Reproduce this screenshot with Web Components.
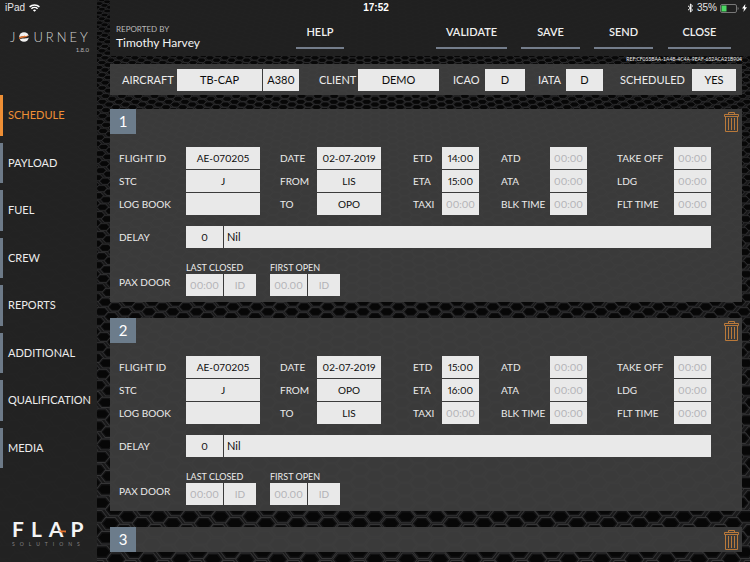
<!DOCTYPE html>
<html lang="en">
<head>
<meta charset="utf-8">
<title>Journey</title>
<style>
  body { margin: 0; background: #0c0c0d; font-family: Lato, "Open Sans", sans-serif; color: #e4e4e4; }
</style>
</head>
<body>
<journey-app></journey-app>
<script>
const define = (name, html, setup) => {
  customElements.define(name, class extends HTMLElement {
    connectedCallback() {
      if (this.shadowRoot) return;
      const root = this.attachShadow({ mode: "open" });
      const t = document.createElement("template");
      t.innerHTML = typeof html === "function" ? html(this) : html;
      root.append(t.content.cloneNode(true));
      if (setup) setup(this, root);
    }
  });
};

/* Honeycomb mesh whose cells grow towards the bottom of the page */
define("mesh-backdrop", `
<style>
  :host { display: block; overflow: hidden; min-height: 0; contain: size; }
  svg { display: block; width: 100%; height: 100%; }
</style>
<svg viewBox="0 0 750 562" preserveAspectRatio="xMidYMid slice" aria-hidden="true"></svg>`,
(host, root) => {
  let out = '<rect width="750" height="562" fill="#19191a"/>';
  let y = 0, odd = 0;
  while (y < 580) {
    const pitch = 13 + 18 * y / 520, h = 3.6 + 10.4 * y / 520, q = pitch / 6;
    for (let i = -30; i <= 30; i++) {
      const x = 375 + (i + odd / 2) * pitch;
      if (x < -20 || x > 770) continue;
      const pts = (a, b) => [[-2,0],[-1,-1],[1,-1],[2,0],[1,1],[-1,1]]
        .map(p => (x + p[0] * q * a).toFixed(1) + "," + (y + p[1] * h / 2 * b).toFixed(1)).join(" ");
      out += `<polygon points="${pts(.97, .95)}" fill="#353536"/><polygon points="${pts(.87, .8)}" fill="#121213"/><polygon points="${pts(.7, .6)}" fill="#070707"/>`;
    }
    y += h / 2; odd = 1 - odd;
  }
  root.querySelector("svg").innerHTML = out;
});

define("status-bar", `
<style>
  :host { display: grid; grid-template-columns: 1fr auto 1fr; align-items: center; padding: 0 3px 0 5px;
    font: 10px/16px "Liberation Sans", sans-serif; color: #e6e6e6; }
  div { display: flex; align-items: center; gap: 4px; }
  .end { justify-content: flex-end; gap: 3px; }
  b { font-weight: 700; color: #fff; }
</style>
<div><span>iPad</span>
  <svg width="11" height="8" viewBox="0 0 11 8" fill="none" stroke="#fff" stroke-width="1.5"><path d="M.6 2.9a7 7 0 0 1 9.8 0M2.4 4.8a4.4 4.4 0 0 1 6.2 0"/><path d="M5.5 7.8 3.9 6.2a2.3 2.3 0 0 1 3.2 0z" fill="#fff" stroke="none"/></svg>
</div>
<b>17:52</b>
<div class="end">
  <svg width="7" height="10" viewBox="0 0 7 10" fill="none" stroke="#fff"><path d="M1 2.8 5.6 7 3.4 9V1l2.2 2L1 7.2"/></svg>
  <span>35%</span>
  <svg width="19" height="9" viewBox="0 0 19 9"><rect x=".5" y=".5" width="16" height="8" rx="1.5" fill="none" stroke="#777"/><rect x="1.5" y="1.5" width="5" height="6" fill="#4cd964"/><path d="M17.6 3v3q1-.4 1-1.5t-1-1.5z" fill="#777"/></svg>
  <svg width="5" height="8" viewBox="0 0 5 8"><path d="M3.3 0 0 4.6h2L1.4 8 5 3.2H3z" fill="#fff"/></svg>
</div>`);

define("journey-logo", `
<style>
  :host { display: block; padding: 0 8px 0 10px; }
  .mark { display: flex; align-items: center; gap: 4px; font-size: 13px; line-height: 18px; font-weight: 300; color: #d2d2d2; }
  .mark span { letter-spacing: 3px; }
  svg { flex: none; }
  .v { font-size: 6px; line-height: 8px; text-align: right; color: #b4b4b4; }
</style>
<div class="mark">J
  <svg width="10" height="10" viewBox="0 0 10 10"><circle cx="5" cy="5" r="4.8" fill="#f2f2f2"/><path d="M0 5.2C3 3.400 7 5.400 10 3.600V5.600C7 7.300 3 5.400 .3 7.400z" fill="#222"/><path d="M.1 5.600C3 3 6.500 5 9.700 3C7.500 6.200 3 5 .2 7z" fill="#e5732e"/></svg>
  <span>URNEY</span></div>
<div class="v">1.8.0</div>`);

define("flap-logo", `
<style>
  :host { display: block; padding: 0 0 0 12px; }
  .mark { display: grid; font-size: 21px; line-height: 24px; font-weight: 700; color: #f4f4f4; letter-spacing: 7px; }
  .mark > * { grid-area: 1 / 1; }
  svg { width: 75px; height: 24px; }
  small { display: block; font-size: 5px; line-height: 6px; letter-spacing: 5px; color: #858585; }
</style>
<div class="mark"><span>FLAP</span><svg viewBox="0 0 75 24" aria-hidden="true"><path d="M46 13.500h8v2l-4-.500 1.500 2z" fill="#e5732e"/></svg></div>
<small>SOLUTIONS</small>`);

define("nav-item", h => `
<style>
  :host { display: grid; }
  a { display: flex; align-items: center; border-left: 3px solid #6d7a88; padding-left: 5px;
    color: #ececec; text-decoration: none; font-size: 11px; line-height: 14px; }
  :host([current]) a { color: #ee8f35; border-color: #ee8f35; }
</style>
<a href="#" ${h.hasAttribute("current") ? 'aria-current="page"' : ""}><slot></slot></a>`);

define("side-bar", `
<style>
  :host { display: flex; flex-direction: column; background: rgba(35,35,35,.97); box-sizing: border-box; padding: 28px 0 15px; }
  nav { flex: 1; display: grid; grid-auto-rows: 1fr; gap: 7px; margin: 41px 0 49px; }
</style>
<journey-logo></journey-logo>
<nav>
  <nav-item current>SCHEDULE</nav-item><nav-item>PAYLOAD</nav-item><nav-item>FUEL</nav-item><nav-item>CREW</nav-item>
  <nav-item>REPORTS</nav-item><nav-item>ADDITIONAL</nav-item><nav-item>QUALIFICATION</nav-item><nav-item>MEDIA</nav-item>
</nav>
<flap-logo></flap-logo>`);

define("tool-button", `
<style>
  :host { display: block; }
  button { all: unset; box-sizing: border-box; width: 100%; display: block; text-align: center; cursor: pointer;
    border-bottom: 2px solid #747d8b; padding-bottom: 6px; font-size: 11px; line-height: 18px; font-weight: 600; color: #efefef; }
</style>
<button type="button"><slot></slot></button>`);

define("top-bar", `
<style>
  :host { display: grid; grid-template-columns: 186fr 48fr 92fr 71fr 14fr 59fr 14fr 59fr 15fr 63fr 19fr;
    align-items: start; background: rgba(33,33,33,.97); box-sizing: border-box; padding: 23px 0 5px 0; }
  .who { padding-left: 6px; font-size: 12px; line-height: 16px; color: #f2f2f2; }
  small { display: block; font-size: 8px; line-height: 12px; color: #b9b9b9; }
</style>
<div class="who"><small>REPORTED BY</small>Timothy Harvey</div>
<tool-button>HELP</tool-button><i></i>
<tool-button>VALIDATE</tool-button><i></i>
<tool-button>SAVE</tool-button><i></i>
<tool-button>SEND</tool-button><i></i>
<tool-button>CLOSE</tool-button>`);

/* A label followed by one or two joined boxes */
define("field-row", h => {
  const box = (v, ph, w, name) => `<input value="${v || ""}" placeholder="${ph || ""}" style="${w ? `flex:0 0 ${w}px` : "flex:1"}" ${name ? `aria-label="${name}"` : 'id="f"'}>`;
  const a = n => h.getAttribute(n);
  return `
<style>
  :host { display: flex; align-items: center; min-width: 0; }
  label { flex: 1 0 auto; font-size: 10px; line-height: 14px; color: #ebebeb; white-space: nowrap; }
  :host([lead]) label { flex: 0 0 67px; }
  :host([meta]) label { flex: 0 0 var(--label-width, auto); font-size: 11px; }
  div { display: flex; gap: 1px; min-width: 0; }
  :host([lead]) div, :host([meta]) div { flex: 1; }
  input { box-sizing: border-box; width: 0; min-width: 0; height: 22px; margin: 0; padding: 0; border: 0; border-radius: 0;
    background: #e9e9e9; color: #0c0c0c; font: 10px/22px Lato, sans-serif; font-variant-numeric: proportional-nums; text-align: center; }
  :host([meta]) input { font-size: 11px; }
  input::placeholder { color: #b2b2b6; opacity: 1; }
  :host([lead]) input + input { text-align: left; padding-left: 3px; font-size: 11px; }
</style>
<label for="f">${a("label")}</label>
<div>${box(a("value"), a("hint"), a("w"))}${h.hasAttribute("second") ? box(a("second"), "", a("w2"), a("label") + " detail") : ""}</div>`;
});

define("flight-meta", `
<style>
  :host { display: grid; grid-template-columns: 177fr 140fr 86fr 78fr 133fr; background: rgba(62,62,62,.95); padding: 5px 6px 4px 12px; }
  .a { --label-width: 55px; }
  .b { --label-width: 39px; margin-left: 20px; }
  .c { --label-width: 32px; margin-left: 14px; }
  .d { --label-width: 28px; margin-left: 13px; }
  .s { --label-width: 72px; margin-left: 17px; }
</style>
<field-row meta class="a" label="AIRCRAFT" value="TB-CAP" second="A380" w2="36"></field-row>
<field-row meta class="b" label="CLIENT" value="DEMO"></field-row>
<field-row meta class="c" label="ICAO" value="D"></field-row>
<field-row meta class="d" label="IATA" value="D"></field-row>
<field-row meta class="s" label="SCHEDULED" value="YES"></field-row>`);

define("door-time", h => `
<style>
  :host { display: block; }
  fieldset { all: unset; display: grid; gap: 1px; }
  legend { all: unset; font-size: 9px; line-height: 12px; color: #ebebeb; }
  div { display: grid; grid-template-columns: 37px 32px; gap: 1px; }
  input { box-sizing: border-box; width: 100%; height: 22px; border: 0; border-radius: 0; padding: 0; margin: 0; background: #e9e9e9;
    font: 10px/22px Lato, sans-serif; font-variant-numeric: proportional-nums; text-align: center; }
  input::placeholder { color: #b2b2b6; opacity: 1; }
</style>
<fieldset><legend>${h.getAttribute("label")}</legend>
<div><input placeholder="${h.getAttribute("hint")}" aria-label="Time"><input placeholder="ID" aria-label="ID"></div></fieldset>`);

define("leg-card", h => {
  const a = n => h.getAttribute(n);
  return `
<style>
  :host { display: block; background: rgba(61,61,61,.95); }
  header { display: flex; justify-content: space-between; align-items: flex-start; height: 25px; }
  h2 { margin: 0; width: 26px; font-size: 15px; line-height: 25px; font-weight: 400; text-align: center; background: #6c7c8b; color: #fff; }
  button { all: unset; cursor: pointer; padding: 3px 3px 0 0; line-height: 0; }
  section { padding: 13px 31px 6px 9px; display: grid; gap: 11px; }
  .times { display: grid; grid-template-columns: 141fr 121fr 98fr 108fr 124fr; }
  .times div { display: grid; gap: 1px; }
  .times div:nth-child(2) { padding-left: 20px; } .times div:nth-child(3) { padding-left: 32px; }
  .times div:nth-child(4) { padding-left: 22px; } .times div:nth-child(5) { padding-left: 30px; }
  .doors { display: flex; align-items: flex-end; gap: 14px; margin-top: 3px; }
  .doors span { width: 53px; font-size: 10px; line-height: 14px; padding-bottom: 7px; white-space: nowrap; color: #ebebeb; }
</style>
<header><h2>${a("n")}</h2><button type="button" aria-label="Delete leg ${a("n")}">
<svg width="15" height="20" viewBox="0 0 15 20" fill="none" stroke="#b9793a"><path d="M.5 2.500h14v2H.5zM4.500 2.500v-2h6v2M1.500 4.500v15h12v-15M4.500 6v12M7.500 6v12M10.500 6v12"/></svg></button></header>
${a("from") ? `<section>
<div class="times">
  <div><field-row w="74" label="FLIGHT ID" value="AE-070205"></field-row><field-row w="74" label="STC" value="J"></field-row><field-row w="74" label="LOG BOOK"></field-row></div>
  <div><field-row w="64" label="DATE" value="02-07-2019"></field-row><field-row w="64" label="FROM" value="${a("from")}"></field-row><field-row w="64" label="TO" value="${a("to")}"></field-row></div>
  <div><field-row w="37" label="ETD" value="${a("etd")}"></field-row><field-row w="37" label="ETA" value="${a("eta")}"></field-row><field-row w="37" label="TAXI" hint="00:00"></field-row></div>
  <div><field-row w="37" label="ATD" hint="00:00"></field-row><field-row w="37" label="ATA" hint="00:00"></field-row><field-row w="37" label="BLK TIME" hint="00:00"></field-row></div>
  <div><field-row w="37" label="TAKE OFF" hint="00:00"></field-row><field-row w="37" label="LDG" hint="00:00"></field-row><field-row w="37" label="FLT TIME" hint="00:00"></field-row></div>
</div>
<field-row lead w="37" label="DELAY" value="0" second="Nil"></field-row>
<div class="doors"><span>PAX DOOR</span><door-time label="LAST CLOSED" hint="00:00"></door-time><door-time label="FIRST OPEN" hint="00.00"></door-time></div>
</section>` : ""}`;
});

define("journey-app", `
<style>
  :host { display: grid; grid-template-columns: 97px 1fr; grid-template-rows: 16px auto; min-height: 100vh; }
  mesh-backdrop { grid-area: 1 / 1 / 3 / 3; }
  side-bar { grid-area: 1 / 1 / 3 / 2; }
  main { grid-area: 1 / 2 / 3 / 3; margin-left: 13px; padding-bottom: 10px; min-width: 0; }
  status-bar { grid-area: 1 / 1 / 2 / 3; }
  p { margin: 0 8px 0 0; text-align: right; font-size: 5px; line-height: 6px; padding: 0 0 2px; color: #eee; }
  .list { margin: 14px 8px 0 0; display: grid; gap: 16px; }
  flight-meta { margin-right: 8px; }
</style>
<mesh-backdrop></mesh-backdrop>
<side-bar></side-bar>
<main>
  <top-bar></top-bar>
  <p>REF:CF055BAA-1A4B-4C4A-9EAF-652ACA21B904</p>
  <flight-meta></flight-meta>
  <div class="list">
    <leg-card n="1" from="LIS" to="OPO" etd="14:00" eta="15:00"></leg-card>
    <leg-card n="2" from="OPO" to="LIS" etd="15:00" eta="16:00"></leg-card>
    <leg-card n="3"></leg-card>
  </div>
</main>
<status-bar></status-bar>`);
</script>
</body>
</html>
